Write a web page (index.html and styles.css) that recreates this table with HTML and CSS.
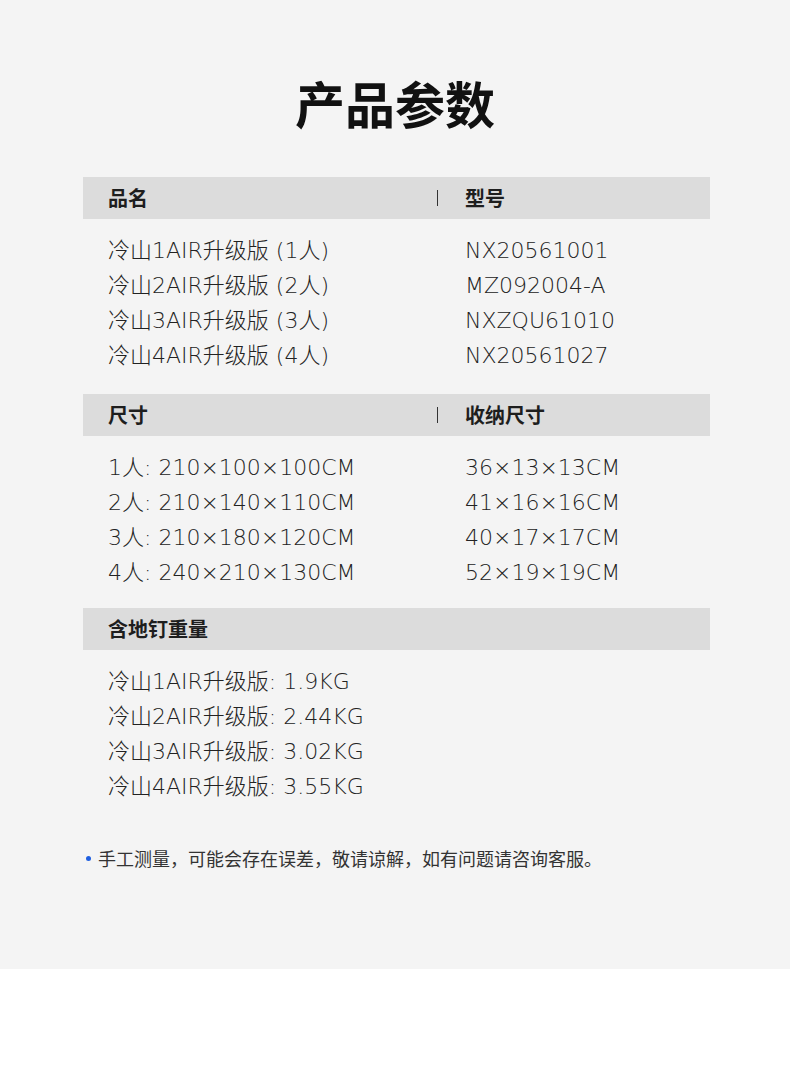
FILE: index.html
```html
<!DOCTYPE html>
<html lang="zh-CN">
<head>
<meta charset="utf-8">
<title>产品参数</title>
<link rel="stylesheet" href="styles.css">
</head>
<body>
<div class="page">
  <h1 class="title">产品参数</h1>

  <section class="spec spec-first">
    <div class="bar">
      <div class="bar-cell">品名</div>
      <span class="divider"></span>
      <div class="bar-cell bar-cell-2">型号</div>
    </div>
    <div class="rows">
      <div class="cell">冷山1AIR升级版 (1人)</div><div class="cell">NX20561001</div>
      <div class="cell">冷山2AIR升级版 (2人)</div><div class="cell">MZ092004-A</div>
      <div class="cell">冷山3AIR升级版 (3人)</div><div class="cell">NXZQU61010</div>
      <div class="cell">冷山4AIR升级版 (4人)</div><div class="cell">NX20561027</div>
    </div>
  </section>

  <section class="spec spec-second">
    <div class="bar">
      <div class="bar-cell">尺寸</div>
      <span class="divider"></span>
      <div class="bar-cell bar-cell-2">收纳尺寸</div>
    </div>
    <div class="rows">
      <div class="cell">1人: 210×100×100CM</div><div class="cell">36×13×13CM</div>
      <div class="cell">2人: 210×140×110CM</div><div class="cell">41×16×16CM</div>
      <div class="cell">3人: 210×180×120CM</div><div class="cell">40×17×17CM</div>
      <div class="cell">4人: 240×210×130CM</div><div class="cell">52×19×19CM</div>
    </div>
  </section>

  <section class="spec spec-third">
    <div class="bar">
      <div class="bar-cell">含地钉重量</div>
    </div>
    <div class="rows rows-single">
      <div class="cell">冷山1AIR升级版: 1.9KG</div>
      <div class="cell">冷山2AIR升级版: 2.44KG</div>
      <div class="cell">冷山3AIR升级版: 3.02KG</div>
      <div class="cell">冷山4AIR升级版: 3.55KG</div>
    </div>
  </section>

  <p class="note"><span class="dot"></span>手工测量，可能会存在误差，敬请谅解，如有问题请咨询客服。</p>
</div>
</body>
</html>
```

FILE: styles.css
```css
html, body {
  margin: 0;
  padding: 0;
  background: #ffffff;
}

body {
  font-family: "Noto Sans CJK SC", "Noto Sans", sans-serif;
  color: #333333;
}

.page {
  width: 790px;
  height: 969px;
  background: #f4f4f4;
  box-sizing: border-box;
  padding-top: 72px;
  display: flex;
  flex-direction: column;
}

.title {
  margin: 0;
  height: 60px;
  line-height: 60px;
  font-size: 50px;
  font-weight: 700;
  color: #111111;
  text-align: center;
}

.spec {
  margin: 0 80px 0 83px;
}

.spec-first { margin-top: 45px; }
.spec-second { margin-top: 21px; }
.spec-third { margin-top: 18px; }

.bar {
  height: 42px;
  background: #dcdcdc;
  display: flex;
  align-items: center;
  padding-left: 25px;
}

.bar-cell {
  font-size: 20px;
  font-weight: 700;
  color: #1e1e1e;
  line-height: 42px;
}

.bar-cell:first-child {
  width: 329px;
}

.divider {
  width: 1px;
  height: 16px;
  background: #333333;
}

.bar-cell-2 {
  padding-left: 27px;
}

.rows {
  display: grid;
  grid-template-columns: 357px 1fr;
  padding: 14px 0 0 25px;
}

.rows-single {
  grid-template-columns: 1fr;
}

.cell {
  font-family: "DejaVu Sans", "Noto Sans CJK SC", sans-serif;
  font-size: 22px;
  font-weight: 300;
  line-height: 35px;
  color: #222222;
  white-space: nowrap;
}

.note {
  margin: 42px 0 0 86px;
  font-size: 18px;
  line-height: 24px;
  color: #333333;
  display: flex;
  align-items: center;
}

.dot {
  width: 5px;
  height: 5px;
  border-radius: 50%;
  background: #1f5fe0;
  margin-right: 7px;
}
```
